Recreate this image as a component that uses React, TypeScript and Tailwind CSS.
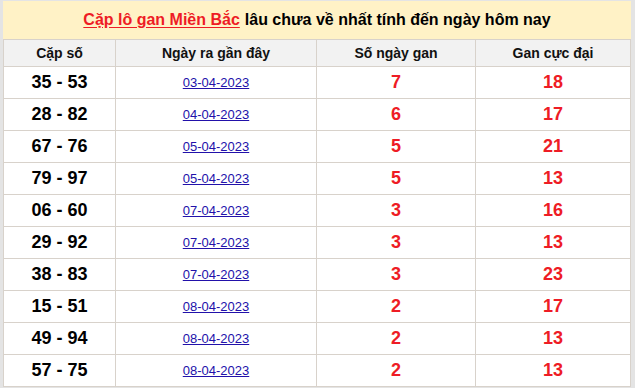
import React from "react";

const rows: [string, string, string, string][] = [
  ["35 - 53", "03-04-2023", "7", "18"],
  ["28 - 82", "04-04-2023", "6", "17"],
  ["67 - 76", "05-04-2023", "5", "21"],
  ["79 - 97", "05-04-2023", "5", "13"],
  ["06 - 60", "07-04-2023", "3", "16"],
  ["29 - 92", "07-04-2023", "3", "13"],
  ["38 - 83", "07-04-2023", "3", "23"],
  ["15 - 51", "08-04-2023", "2", "17"],
  ["49 - 94", "08-04-2023", "2", "13"],
  ["57 - 75", "08-04-2023", "2", "13"],
];

export default function App() {
  return (
    <div
      className="w-[635px] h-[388px] bg-[#e4e4e4] pl-[3px] pr-[4px] pt-[1px] overflow-hidden"
      style={{ fontFamily: '"Liberation Sans", Arial, sans-serif' }}
    >
      <div className="bg-white">
        <div className="h-[38px] bg-[#fff2c6] flex items-center justify-center text-[16px] font-bold text-black">
          <span className="text-[#ee1c25] underline underline-offset-2">Cặp lô gan Miền Bắc</span>
          <span className="ml-[5px]">lâu chưa về nhất tính đến ngày hôm nay</span>
        </div>
        <table className="w-full border-collapse table-fixed">
          <colgroup>
            <col className="w-[112px]" />
            <col className="w-[201px]" />
            <col className="w-[159px]" />
            <col />
          </colgroup>
          <thead>
            <tr className="h-[27px] bg-[#f2f2f2] text-[14px] font-bold text-[#111]">
              <th className="border border-[#d8d2cb] font-bold">Cặp số</th>
              <th className="border border-[#d8d2cb] font-bold">Ngày ra gần đây</th>
              <th className="border border-[#d8d2cb] font-bold">Số ngày gan</th>
              <th className="border border-[#d8d2cb] font-bold">Gan cực đại</th>
            </tr>
          </thead>
          <tbody>
            {rows.map((r, i) => (
              <tr key={i} className="h-[32px]">
                <td className="border border-[#d8d2cb] text-center text-[18px] font-bold text-black">{r[0]}</td>
                <td className="border border-[#d8d2cb] text-center text-[13px] text-[#2211aa]">
                  <span className="underline">{r[1]}</span>
                </td>
                <td className="border border-[#d8d2cb] text-center text-[18px] font-bold text-[#ee1c25]">{r[2]}</td>
                <td className="border border-[#d8d2cb] text-center text-[18px] font-bold text-[#ee1c25]">{r[3]}</td>
              </tr>
            ))}
          </tbody>
        </table>
      </div>
    </div>
  );
}
